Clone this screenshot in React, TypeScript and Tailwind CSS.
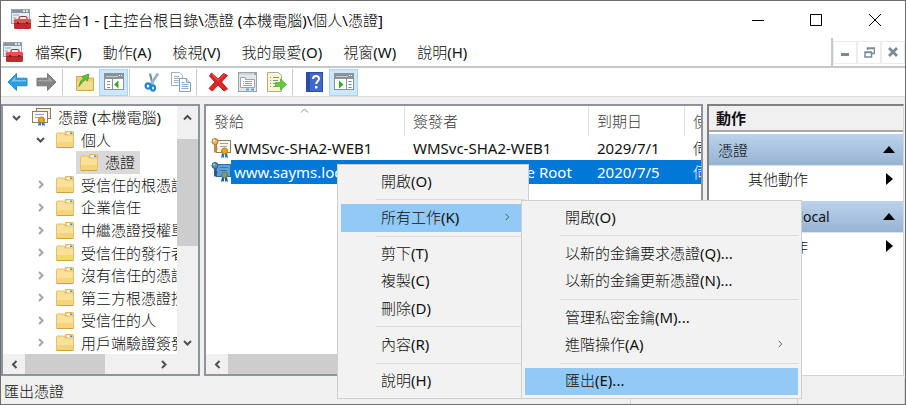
import type { ReactNode } from "react";

function ToolboxIcon() {
  return (
    <svg width="21" height="21" viewBox="0 0 21 21" aria-hidden="true">
      <rect x="0.5" y="0.5" width="18" height="14" fill="#e9edf0" stroke="#9aa4ac" />
      <rect x="1" y="1" width="17" height="3" fill="#8796a3" />
      <rect x="12" y="1" width="2" height="2" fill="#dfe6eb" />
      <rect x="15" y="1" width="2" height="2" fill="#dfe6eb" />
      <path d="M2 6h6M2 9h3M2 12h2" stroke="#9aa7b1" />
      <path d="M8 10.500V9q0-1.500 2-1.500h4q2 0 2 1.500v1.500" fill="none" stroke="#8c3a3a" strokeWidth="1.200" />
      <rect x="3" y="10" width="17" height="10" rx="1.500" fill="#c02a2c" />
      <rect x="3" y="10" width="17" height="4" rx="1.500" fill="#dd5452" />
      <path d="M3 14.500h17" stroke="#a3282a" />
      <rect x="6" y="13" width="2" height="2" fill="#7d1416" />
      <rect x="15" y="13" width="2" height="2" fill="#7d1416" />
    </svg>
  );
}

function ArrowIcon({ forward = false }: { forward?: boolean }) {
  return (
    <svg width="21" height="20" viewBox="0 0 21 20" aria-hidden="true">
      {forward ? (
        <g>
          <path d="M20 10 11.500 1.500v4.700H1v7.600h10.500v4.700z" fill="#858585" stroke="#7a7a7a" strokeLinejoin="round" />
          <path d="M2 8h10.500V4.500l4.500 5H2z" fill="#a3a3a3" />
        </g>
      ) : (
        <g>
          <path d="M1 10 9.500 1.500v4.700H20v7.600H9.500v4.700z" fill="#2d9be0" stroke="#2b8bcf" strokeLinejoin="round" />
          <path d="M19 8H8.500V4.500L4 9.500h15z" fill="#72c6f5" />
        </g>
      )}
    </svg>
  );
}

function FolderUpIcon() {
  return (
    <svg width="20" height="20" viewBox="0 0 20 20" aria-hidden="true">
      <path d="M1.500 18.500V4.500h6l1.500 1.500h9.500v12.500z" fill="#f1cf72" stroke="#d2ac55" />
      <path d="M2.500 9.500h15v8h-15z" fill="#f6dc8e" />
      <path d="M4 14.500c.5-4 2-6.500 4.500-8L7 4.500 14 2l-1.500 7-2-1.500C8.500 9 6.500 11 4 14.500z" fill="#5cc43a" stroke="#3f9a2c" strokeWidth="0.800" />
    </svg>
  );
}

function PaneIcon({ right = false }: { right?: boolean }) {
  return (
    <svg width="20" height="18" viewBox="0 0 20 18" aria-hidden="true">
      <rect x="0.500" y="0.500" width="19" height="16" fill="#fff" stroke="#8b9199" />
      <rect x="1" y="1" width="18" height="5" fill="#8b929a" />
      <path d="M2 3.500h12" stroke="#c5cbd1" />
      <path d="M15 2.500h1M17 2.500h1" stroke="#fff" />
      {right ? (
        <g>
          <path d="M12.500 6v10" stroke="#8b9199" />
          <path d="M5 7.500 9.500 11.500 5 15.500z" fill="#35a82a" />
          <path d="M14.500 8.500h3M14.500 11.500h3M14.500 14.500h3" stroke="#5a83b5" />
        </g>
      ) : (
        <g>
          <path d="M8.500 6v10" stroke="#8b9199" />
          <path d="M3 8.500h3M3 11.500h3M3 14.500h3" stroke="#7f8fa3" />
          <path d="M14.500 7.500 10 11.500l4.500 4z" fill="#35a82a" />
        </g>
      )}
    </svg>
  );
}

function ScissorsIcon() {
  return (
    <svg width="18" height="20" viewBox="0 0 18 20" aria-hidden="true">
      <path d="M7 1.500 9.500 12" stroke="#6c8ba6" strokeWidth="2" />
      <path d="M15 1.500 7.500 13" stroke="#9db4c7" strokeWidth="3" />
      <ellipse cx="5" cy="14" rx="2.400" ry="2.600" fill="none" stroke="#1f86d1" strokeWidth="2.200" />
      <ellipse cx="10" cy="16" rx="2" ry="2.600" fill="none" stroke="#1f86d1" strokeWidth="2.200" />
    </svg>
  );
}

function CopyIcon() {
  return (
    <svg width="20" height="20" viewBox="0 0 20 20" aria-hidden="true">
      <path d="M.5.5h8l3 3v10H.5z" fill="#fff" stroke="#a3afbe" />
      <path d="M3 4.500h5M3 6.500h6M3 8.500h6M3 10.500h5" stroke="#9db8da" />
      <path d="M8.500 6.500h7l4 4v9h-11z" fill="#fff" stroke="#8f9db0" />
      <path d="M15.500 6.500v4h4" fill="#dfe8f2" stroke="#8f9db0" />
      <path d="M10.500 10.500h3M10.500 12.500h7M10.500 14.500h7M10.500 16.500h7" stroke="#8aaed8" />
    </svg>
  );
}

function DeleteIcon() {
  return (
    <svg width="21" height="20" viewBox="0 0 21 20" aria-hidden="true">
      <path d="M3.500 1 10 7l5.500-5.500 4 2L13.500 10l6 7-3.500 2-6-6-5.500 6L1 16.500l6-6.500-5.500-6z" fill="#e02424" stroke="#c42222" strokeLinejoin="round" />
      <path d="M4 2.500 10 8.500l6-6" fill="none" stroke="#f4685f" />
    </svg>
  );
}

function PropertiesIcon() {
  return (
    <svg width="20" height="20" viewBox="0 0 20 20" aria-hidden="true">
      <rect x="0.500" y="0.500" width="18" height="19" fill="#e3e7ea" stroke="#98a2ab" />
      <path d="M1 2h14" stroke="#b8c1c8" />
      <path d="M16 2h2" stroke="#56626d" />
      <path d="M2.500 5.500h5v2h9v8h-14z" fill="#fff" stroke="#98a5b0" />
      <path d="M5 9.500h1M7 9.500h7M5 11.500h1M7 11.500h7M5 13.500h9" stroke="#8aa5c4" />
      <path d="M8 17.500h3M13 17.500h3" stroke="#5ea3d8" strokeWidth="2" />
    </svg>
  );
}

function ExportIcon() {
  return (
    <svg width="21" height="20" viewBox="0 0 21 20" aria-hidden="true">
      <path d="M1.500.5h11l3 3v16h-14z" fill="#fbf5d2" stroke="#b3ab8a" />
      <path d="M4 5.500h1M7 5.500h6M4 8.500h1M7 8.500h5M4 11.500h1M7 11.500h3M4 14.500h1M7 14.500h3" stroke="#848d9b" />
      <path d="M9.500 10.500h5v-3.500l6 5.500-6 5.500V14.500h-5z" fill="#66c83e" stroke="#52ab38" strokeWidth="0.800" />
    </svg>
  );
}

function HelpIcon() {
  return (
    <svg width="17" height="20" viewBox="0 0 17 20" aria-hidden="true">
      <rect x="0.500" y="0.500" width="16" height="19" fill="#4168cc" stroke="#2c4da3" />
      <path d="M1 1h3v18H1z" fill="#2a4ba8" />
      <path d="M7 7q0-3 3-3t3 2.800c0 2.200-2.800 2.500-2.800 5.200" fill="none" stroke="#fff" strokeWidth="2" />
      <rect x="9" y="14" width="2.400" height="2.400" fill="#fff" />
    </svg>
  );
}

function FolderIcon() {
  return (
    <svg width="18" height="17" viewBox="0 0 18 17" aria-hidden="true" className="shrink-0">
      <path d="M9 4V1.500Q9 .5 10 .5h6.500q1 0 1 1V5z" fill="#f0d287" stroke="#d9b866" />
      <rect x="11" y="1.500" width="5" height="2" fill="#fff" />
      <rect x="14" y="1.500" width="2" height="1.500" fill="#3b96d6" />
      <path d="M.5 3q0-1 1-1h6l1.500 2h8.500v12.500H.5z" fill="#fae197" stroke="#e2c06c" />
      <path d="M1 11h16v5H1z" fill="#f5d47a" />
      <path d="M1 16.500h16" stroke="#c9a24f" />
    </svg>
  );
}

function CertStoreIcon() {
  return (
    <svg width="19" height="19" viewBox="0 0 19 19" aria-hidden="true" className="shrink-0">
      <rect x="4.500" y="0.500" width="14" height="10" fill="#f6eedb" stroke="#8f7d5a" />
      <rect x="0.500" y="3.500" width="15" height="11" fill="#fffdf5" stroke="#8f7d5a" />
      <path d="M3 6.500h9M3 9.500h4" stroke="#8aa0d0" />
      <path d="m7 13-1 5 2-1 1 1V13zM12 13l1 5-2-1-1 1V13z" fill="#2a6fd6" />
      <circle cx="9.500" cy="12" r="3" fill="#e8a818" stroke="#b57b0a" />
    </svg>
  );
}

function CertKeyIcon({ selected = false }: { selected?: boolean }) {
  return (
    <svg width="20" height="20" viewBox="0 0 20 20" aria-hidden="true" className="shrink-0">
      <rect x="5.500" y="2.500" width="14" height="12" fill={selected ? "#5ba1dc" : "#fdf8ea"} stroke={selected ? "#2d6da8" : "#8f7d5a"} />
      <path d="M9 5.500h8M9 8.500h7" stroke={selected ? "#2c77bd" : "#8aa0d0"} />
      <circle cx="4" cy="3.500" r="3" fill={selected ? "#5a8fae" : "#f0b95a"} stroke={selected ? "#2b5c83" : "#a8742f"} />
      <circle cx="3" cy="2.500" r="1" fill={selected ? "#bcd6ea" : "#fff"} />
      <path d="M4 6.500v8M4 10.500h2.500M4 13.500h2" stroke={selected ? "#2b5c83" : "#c98c38"} strokeWidth="2" />
      <path d="m11 15-1 5 2-1 1 1v-5zM16 15l1 5-2-1-1 1v-5z" fill={selected ? "#0f5cc0" : "#2a6fd6"} />
      <circle cx="13.500" cy="13" r="3" fill={selected ? "#8b9a6a" : "#e8a818"} stroke={selected ? "#5b7560" : "#b57b0a"} />
    </svg>
  );
}

type Direction = "up" | "down" | "left" | "right";

const chevrons: Record<Direction, string> = {
  up: "M1 6.500 4.500 3 8 6.500",
  down: "M1 3 4.500 6.500 8 3",
  left: "M6.500 1 3 4.500 6.500 8",
  right: "M3 1 6.500 4.500 3 8",
};

function Chevron({ to, color = "#505050", width = 2, size = 9 }: { to: Direction; color?: string; width?: number; size?: number }) {
  return (
    <svg width={size} height={size} viewBox="0 0 9 9" aria-hidden="true" className="shrink-0">
      <path d={chevrons[to]} fill="none" stroke={color} strokeWidth={width} />
    </svg>
  );
}

/* Chinese glyphs stay light while Latin runs take the regular weight. */
function Mixed({ text }: { text: string }) {
  return (
    <span className="whitespace-pre">
      {text.split(/([\x20-\x7e]+)/).map((run, i) =>
        i % 2 === 1 ? <span key={i} className="font-normal">{run}</span> : run,
      )}
    </span>
  );
}

function Divider() {
  return <div className="ml-px mr-[7px] h-[26px] w-px bg-[#c8ccd0]" />;
}

function ToolButton({ label, pressed = false, children }: { label: string; pressed?: boolean; children: ReactNode }) {
  return (
    <button
      type="button"
      aria-label={label}
      className={`flex h-[27px] w-[29px] items-center justify-center ${pressed ? "border border-[#a8d4f5] bg-[#cce8ff]" : ""}`}
    >
      {children}
    </button>
  );
}

const menus = ["檔案(F)", "動作(A)", "檢視(V)", "我的最愛(O)", "視窗(W)", "說明(H)"];

const stores = [
  "受信任的根憑證授權單位",
  "企業信任",
  "中繼憑證授權單位",
  "受信任的發行者",
  "沒有信任的憑證",
  "第三方根憑證授權單位",
  "受信任的人",
  "用戶端驗證簽發者",
];

const certificates = [
  { to: "WMSvc-SHA2-WEB1", by: "WMSvc-SHA2-WEB1", expires: "2029/7/1", use: "伺服器驗證", selected: false },
  { to: "www.sayms.local", by: "Sayms Enterprise Root", expires: "2020/7/5", use: "伺服器驗證", selected: true },
];

function HorizontalScroll({ thumb }: { thumb: string }) {
  return (
    <div className="flex h-5 bg-[#f0f0f0]">
      <button type="button" aria-label="向左捲動" className="flex w-[22px] items-center justify-center">
        <Chevron to="left" />
      </button>
      <div className="flex-1">
        <div className={`h-full bg-[#cdcdcd] ${thumb}`} />
      </div>
      <button type="button" aria-label="向右捲動" className="flex w-[42px] items-center justify-start pl-[3px]">
        <Chevron to="right" />
      </button>
    </div>
  );
}

function TreePane() {
  const row = "flex flex-1 items-center whitespace-nowrap";
  return (
    <nav aria-label="主控台樹狀目錄" className="flex w-[199px] shrink-0 flex-col border-2 border-[#8f949c] bg-white">
      <div className="flex min-h-0 flex-1">
        <ul className="flex min-w-0 flex-1 flex-col overflow-hidden">
          <li className={`${row} pl-[9px]`}>
            <Chevron to="down" />
            <span className="ml-[11px]"><CertStoreIcon /></span>
            <button type="button" className="ml-[7px]"><Mixed text="憑證 (本機電腦)" /></button>
          </li>
          <li className={`${row} pl-[33px]`}>
            <Chevron to="down" />
            <span className="ml-[11px]"><FolderIcon /></span>
            <button type="button" className="ml-[7px]">個人</button>
          </li>
          <li className={`${row} pl-[73px]`}>
            <button type="button" className="flex h-full items-center gap-[7px] bg-[#d9d9d9] pl-1 pr-[5px]">
              <FolderIcon />
              憑證
            </button>
          </li>
          {stores.map((name) => (
            <li key={name} className={`${row} pl-[33px]`}>
              <Chevron to="right" color="#a6a6a6" />
              <span className="ml-[11px]"><FolderIcon /></span>
              <button type="button" className="ml-[7px]">{name}</button>
            </li>
          ))}
        </ul>
        <div className="flex w-[21px] flex-col items-center bg-[#f0f0f0]">
          <button type="button" aria-label="向上捲動" className="flex h-[33px] w-full items-start justify-center pt-[7px]">
            <Chevron to="up" />
          </button>
          <div className="h-[107px] w-full bg-[#cdcdcd]" />
          <div className="flex-1" />
          <button type="button" aria-label="向下捲動" className="flex h-6 w-full items-center justify-center">
            <Chevron to="down" />
          </button>
        </div>
      </div>
      <HorizontalScroll thumb="w-20" />
    </nav>
  );
}

function CertificateList() {
  const head = "relative overflow-hidden border-r border-[#e2e2e2] pl-2 text-left font-light whitespace-nowrap text-[#3c3c3c]";
  return (
    <main className="flex min-w-0 flex-1 flex-col border-2 border-[#8f949c] bg-white">
      <div className="min-h-0 flex-1 overflow-hidden">
        <table className="w-full table-fixed border-separate border-spacing-0">
          <colgroup>
            <col className="w-[199px]" />
            <col className="w-[184px]" />
            <col className="w-[96px]" />
            <col />
          </colgroup>
          <thead>
            <tr className="h-[30px]">
              <th className={head}>
                發給
                <span className="absolute left-[94px] top-0 flex"><Chevron to="up" color="#8a8a8a" width={1} /></span>
              </th>
              <th className={head}>簽發者</th>
              <th className={head}>到期日</th>
              <th className="overflow-hidden pl-2 text-left font-light whitespace-nowrap text-[#3c3c3c]">使用目的</th>
            </tr>
          </thead>
          <tbody>
            {certificates.map((cert) => {
              const cell = `overflow-hidden whitespace-nowrap p-0 pl-2 pb-px ${cert.selected ? "bg-[#0078d7] text-white" : ""}`;
              return (
                <tr key={cert.to} className="h-6">
                  <td className="p-0 pl-[5px]">
                    <div className="flex h-6 items-center">
                      <CertKeyIcon selected={cert.selected} />
                      <span className={`flex h-full flex-1 items-center pb-px pl-[3px] ${cert.selected ? "bg-[#0078d7] text-white" : ""}`}>
                        <Mixed text={cert.to} />
                      </span>
                    </div>
                  </td>
                  <td className={cell}><Mixed text={cert.by} /></td>
                  <td className={cell}><Mixed text={cert.expires} /></td>
                  <td className={cell}>{cert.use}</td>
                </tr>
              );
            })}
          </tbody>
        </table>
      </div>
      <HorizontalScroll thumb="w-3/5" />
    </main>
  );
}

function ActionGroup({ title, size }: { title: string; size: string }) {
  return (
    <section>
      <button
        type="button"
        className={`flex h-8 w-full items-center justify-between border-b border-[#d6e3f1] bg-linear-to-b from-[#bbd3eb] to-[#98b3d3] pl-[9px] pr-2 ${size}`}
      >
        <Mixed text={title} />
        <svg width="12" height="7" viewBox="0 0 12 7" aria-hidden="true"><path d="M6 0 12 7H0z" fill="#000" /></svg>
      </button>
      <button type="button" className="mb-[7px] flex h-7 w-full items-center justify-between pb-0.5 pl-[39px] pr-[10px]">
        其他動作
        <svg width="7" height="12" viewBox="0 0 7 12" aria-hidden="true"><path d="M0 0 7 6 0 12z" fill="#000" /></svg>
      </button>
    </section>
  );
}

function ActionPane() {
  return (
    <aside className="flex w-[197px] shrink-0 flex-col border border-l-2 border-t-2 border-[#d5d5d5] border-l-[#808080] border-t-[#808080] bg-white">
      <h2 className="mb-0.5 flex h-[26px] items-center border-b-2 border-[#a9a9a9] bg-[#f0f0f0] pl-[7px] font-bold">動作</h2>
      <ActionGroup title="憑證" size="text-[15px]" />
      <ActionGroup title="www.sayms.local" size="text-sm" />
    </aside>
  );
}

type Entry = { label: string; active?: boolean; submenu?: boolean } | null;

const contextEntries: Entry[] = [
  { label: "開啟(O)" },
  null,
  { label: "所有工作(K)", active: true, submenu: true },
  null,
  { label: "剪下(T)" },
  { label: "複製(C)" },
  { label: "刪除(D)" },
  null,
  { label: "內容(R)" },
  null,
  { label: "說明(H)" },
];

const taskEntries: Entry[] = [
  { label: "開啟(O)" },
  null,
  { label: "以新的金鑰要求憑證(Q)..." },
  { label: "以新的金鑰更新憑證(N)..." },
  null,
  { label: "管理私密金鑰(M)..." },
  { label: "進階操作(A)", submenu: true },
  null,
  { label: "匯出(E)...", active: true },
];

function PopupMenu({ entries, place, label }: { entries: Entry[]; place: string; label: string }) {
  return (
    <div role="menu" aria-label={label} className={`absolute flex flex-col border border-[#cfcfcf] bg-[#f2f2f2] p-[3px] ${place}`}>
      {entries.map((entry, i) =>
        entry ? (
          <button
            key={i}
            type="button"
            role="menuitem"
            className={`flex w-full flex-1 items-center justify-between pb-0.5 pl-10 pr-[14px] ${entry.active ? "bg-[#91c9f7]" : ""}`}
          >
            <Mixed text={entry.label} />
            {entry.submenu && <Chevron to="right" color="#505050" width={1} size={8} />}
          </button>
        ) : (
          <div key={i} role="separator" className="flex h-[9px] items-center pl-[35px]">
            <div className="h-px w-full bg-[#dadada]" />
          </div>
        ),
      )}
    </div>
  );
}

export default function App() {
  return (
    <div className="relative flex h-screen w-full flex-col overflow-hidden border border-[#6e6e6e] bg-[#f0f0f0] font-['Noto_Sans','Noto_Sans_CJK_TC',sans-serif] text-[15px] leading-5 font-light text-[#101010]">
      <header className="flex h-[37px] shrink-0 items-center bg-white pl-[10px]">
        <ToolboxIcon />
        <h1 className="ml-[5px] flex-1 text-black"><Mixed text="主控台1 - [主控台根目錄\憑證 (本機電腦)\個人\憑證]" /></h1>
        <button type="button" aria-label="最小化" className="flex h-full w-[58px] items-center justify-center">
          <svg width="12" height="12" viewBox="0 0 12 12"><path d="M0 6.500h12" stroke="#000" /></svg>
        </button>
        <button type="button" aria-label="最大化" className="flex h-full w-[58px] items-center justify-center">
          <svg width="12" height="12" viewBox="0 0 12 12"><path d="M.5.5h11v11H.5z" fill="none" stroke="#000" /></svg>
        </button>
        <button type="button" aria-label="關閉" className="flex h-full w-[60px] items-center justify-center">
          <svg width="12" height="12" viewBox="0 0 12 12"><path d="m0 0 12 12M12 0 0 12" stroke="#000" /></svg>
        </button>
      </header>

      <div className="flex h-[30px] shrink-0 border-b-2 border-[#c3c8cc] bg-white pl-0.5">
        <div className="flex flex-1 items-center">
          <ToolboxIcon />
          <nav aria-label="功能表" className="ml-[11px] flex gap-[21px]">
            {menus.map((name) => (
              <button key={name} type="button"><Mixed text={name} /></button>
            ))}
          </nav>
        </div>
        <div className="flex items-center border-l-2 border-[#c3c8cc] text-[#7b8a99]">
          <button type="button" aria-label="最小化子視窗" className="flex h-[23px] w-6 items-center justify-center border border-[#ececec]">
            <svg width="10" height="10" viewBox="0 0 10 10"><path d="M1 7.500h8" stroke="currentColor" strokeWidth="3" /></svg>
          </button>
          <button type="button" aria-label="還原子視窗" className="flex h-[23px] w-6 items-center justify-center border border-[#ececec]">
            <svg width="11" height="11" viewBox="0 0 11 11">
              <path d="M3.500 3V1h7v5.500H8M3 1.500h8M1 5h6.500v5H1zM1 5.500h7" fill="none" stroke="currentColor" strokeWidth="1.500" />
            </svg>
          </button>
          <button type="button" aria-label="關閉子視窗" className="flex h-[23px] w-6 items-center justify-center border border-[#ececec]">
            <svg width="10" height="10" viewBox="0 0 10 10"><path d="m1 1 8 8M9 1 1 9" stroke="currentColor" strokeWidth="2.800" /></svg>
          </button>
        </div>
      </div>

      <div role="toolbar" aria-label="工具列" className="flex h-[29px] shrink-0 items-center border-b border-[#dcdcdc] bg-white pl-0.5">
        <ToolButton label="上一頁"><ArrowIcon /></ToolButton>
        <ToolButton label="下一頁"><ArrowIcon forward /></ToolButton>
        <Divider />
        <ToolButton label="上移一層"><FolderUpIcon /></ToolButton>
        <ToolButton label="顯示/隱藏主控台樹狀目錄" pressed><PaneIcon /></ToolButton>
        <Divider />
        <ToolButton label="剪下"><ScissorsIcon /></ToolButton>
        <ToolButton label="複製"><CopyIcon /></ToolButton>
        <Divider />
        <ToolButton label="刪除"><DeleteIcon /></ToolButton>
        <ToolButton label="內容"><PropertiesIcon /></ToolButton>
        <ToolButton label="匯出清單"><ExportIcon /></ToolButton>
        <Divider />
        <ToolButton label="說明"><HelpIcon /></ToolButton>
        <ToolButton label="顯示/隱藏動作窗格" pressed><PaneIcon right /></ToolButton>
      </div>

      <div className="mt-[7px] flex min-h-0 flex-1 gap-1 pr-px">
        <TreePane />
        <CertificateList />
        <ActionPane />
      </div>

      <footer className="flex h-7 shrink-0 items-center pl-[3px] pt-0.5">
        <span className="flex-1">匯出憑證</span>
        <div className="h-full w-[167px] border-l border-[#d7d7d7]" />
        <div className="h-full w-[108px] border-x border-[#d7d7d7]" />
      </footer>

      <PopupMenu entries={contextEntries} label="憑證" place="left-[336px] top-[163px] h-[235px] w-[192px]" />
      <PopupMenu entries={taskEntries} label="所有工作" place="left-[520px] top-[199px] h-[199px] w-[281px]" />
    </div>
  );
}
